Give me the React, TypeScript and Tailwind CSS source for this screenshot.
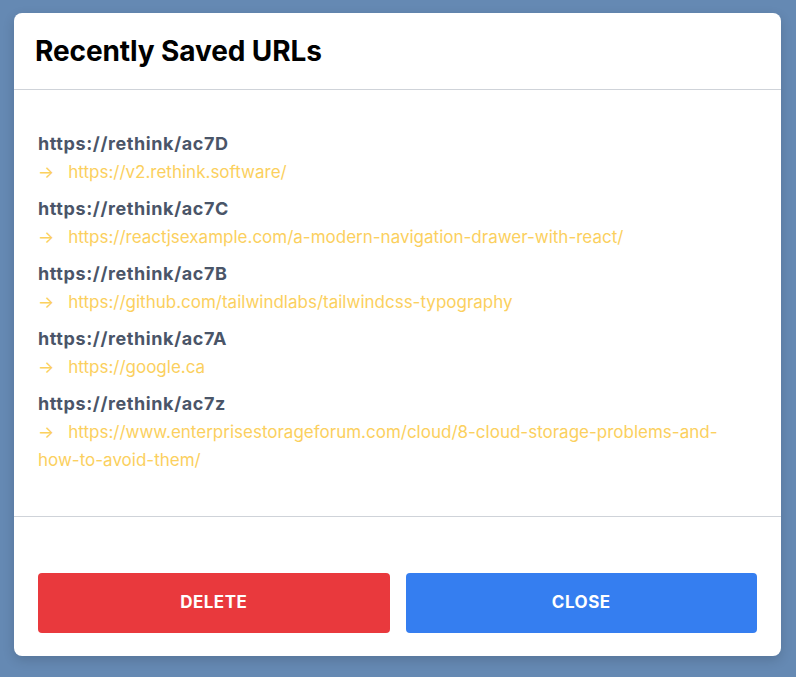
import React from "react";

const items = [
  { short: "https://rethink/ac7D", url: "https://v2.rethink.software/" },
  { short: "https://rethink/ac7C", url: "https://reactjsexample.com/a-modern-navigation-drawer-with-react/" },
  { short: "https://rethink/ac7B", url: "https://github.com/tailwindlabs/tailwindcss-typography" },
  { short: "https://rethink/ac7A", url: "https://google.ca" },
  { short: "https://rethink/ac7z", url: "https://www.enterprisestorageforum.com/cloud/8-cloud-storage-problems-and-how-to-avoid-them/" },
];

export default function App() {
  return (
    <div
      className="w-[796px] h-[677px] bg-[#6589b3] pt-[13px] pl-[14px]"
      style={{ fontFamily: "Inter, 'Noto Sans', sans-serif" }}
    >
      <div className="w-[767px] h-[643px] bg-white rounded-[8px] shadow-[0_4px_12px_rgba(0,0,0,0.15)] flex flex-col">
        <div className="h-[77px] border-b border-[#cfd3d9] flex items-center px-[21px]">
          <h1 className="text-[28px] font-bold text-black tracking-[-0.1px]">Recently Saved URLs</h1>
        </div>
        <div className="px-6 pt-10 pb-[42px] border-b border-[#cfd3d9] flex flex-col gap-[9px]">
          {items.map((it) => (
            <div key={it.short}>
              <div className="text-[18px] leading-7 font-bold text-[#4a5568] tracking-[0.6px]">{it.short}</div>
              <div className="text-[17px] leading-7 text-[#fbd05e] pr-[20px]">
                <span className="mr-[14px]">→</span>
                {it.url}
              </div>
            </div>
          ))}
        </div>
        <div className="flex-1 flex items-end gap-4 px-6 pb-[23px]">
          <button className="flex-1 h-[60px] rounded-[4px] bg-[#e9393d] text-white font-bold text-[17px] tracking-[0.5px]">
            DELETE
          </button>
          <button className="flex-1 h-[60px] rounded-[4px] bg-[#357ef0] text-white font-bold text-[17px] tracking-[0.5px]">
            CLOSE
          </button>
        </div>
      </div>
    </div>
  );
}
